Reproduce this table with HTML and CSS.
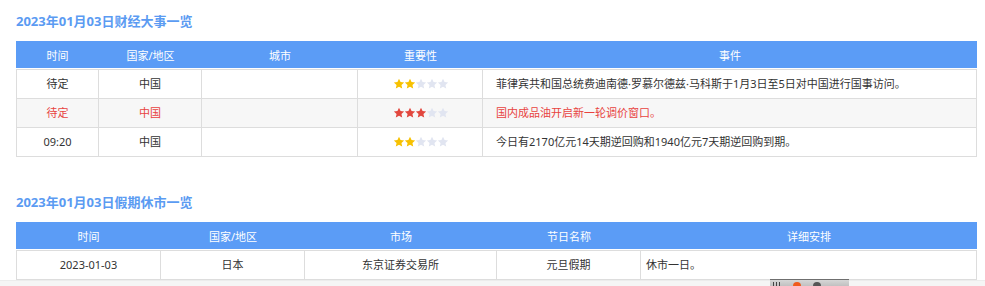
FILE: index.html
```html
<!DOCTYPE html>
<html lang="zh-CN">
<head>
<meta charset="utf-8">
<title>财经大事一览</title>
<link rel="stylesheet" href="styles.css">
</head>
<body>
<svg width="0" height="0" class="defs">
  <defs>
    <path id="star" d="M12 1.5l3.1 6.6 7.2.8-5.4 4.9 1.5 7.1L12 17.3l-6.4 3.6 1.5-7.1L1.7 8.9l7.2-.8z"/>
  </defs>
</svg>
<div class="page">
  <section class="section">
    <h2 class="title">2023年01月03日财经大事一览</h2>
    <table class="tbl tbl-events">
      <thead>
        <tr>
          <th class="e1">时间</th>
          <th class="e2">国家/地区</th>
          <th class="e3">城市</th>
          <th class="e4">重要性</th>
          <th class="e5">事件</th>
        </tr>
      </thead>
      <tbody>
        <tr>
          <td>待定</td>
          <td>中国</td>
          <td></td>
          <td><span class="stars gold"><svg viewBox="0 0 24 24" class="on"><use href="#star"/></svg><svg viewBox="0 0 24 24" class="on"><use href="#star"/></svg><svg viewBox="0 0 24 24"><use href="#star"/></svg><svg viewBox="0 0 24 24"><use href="#star"/></svg><svg viewBox="0 0 24 24"><use href="#star"/></svg></span></td>
          <td class="event">菲律宾共和国总统费迪南德·罗慕尔德兹·马科斯于1月3日至5日对中国进行国事访问。</td>
        </tr>
        <tr class="hot">
          <td>待定</td>
          <td>中国</td>
          <td></td>
          <td><span class="stars red"><svg viewBox="0 0 24 24" class="on"><use href="#star"/></svg><svg viewBox="0 0 24 24" class="on"><use href="#star"/></svg><svg viewBox="0 0 24 24" class="on"><use href="#star"/></svg><svg viewBox="0 0 24 24"><use href="#star"/></svg><svg viewBox="0 0 24 24"><use href="#star"/></svg></span></td>
          <td class="event">国内成品油开启新一轮调价窗口。</td>
        </tr>
        <tr>
          <td>09:20</td>
          <td>中国</td>
          <td></td>
          <td><span class="stars gold"><svg viewBox="0 0 24 24" class="on"><use href="#star"/></svg><svg viewBox="0 0 24 24" class="on"><use href="#star"/></svg><svg viewBox="0 0 24 24"><use href="#star"/></svg><svg viewBox="0 0 24 24"><use href="#star"/></svg><svg viewBox="0 0 24 24"><use href="#star"/></svg></span></td>
          <td class="event">今日有2170亿元14天期逆回购和1940亿元7天期逆回购到期。</td>
        </tr>
      </tbody>
    </table>
  </section>

  <section class="section">
    <h2 class="title">2023年01月03日假期休市一览</h2>
    <table class="tbl tbl-holiday">
      <thead>
        <tr>
          <th class="h1">时间</th>
          <th class="h2">国家/地区</th>
          <th class="h3">市场</th>
          <th class="h4">节日名称</th>
          <th class="h5">详细安排</th>
        </tr>
      </thead>
      <tbody>
        <tr>
          <td>2023-01-03</td>
          <td>日本</td>
          <td>东京证券交易所</td>
          <td>元旦假期</td>
          <td class="detail">休市一日。</td>
        </tr>
      </tbody>
    </table>
  </section>
</div>
<footer class="footbar">
  <div class="widget">
    <span class="w-bars"></span>
    <span class="w-flame"></span>
    <span class="w-dot"></span>
  </div>
</footer>
</body>
</html>
```

FILE: styles.css
```css
* { box-sizing: border-box; }

html, body {
  margin: 0;
  padding: 0;
  background: #fff;
}

body {
  font-family: "Noto Sans", "Noto Sans CJK SC", sans-serif;
  font-size: 11px;
  color: #333;
}

.defs { position: absolute; width: 0; height: 0; }

.page {
  padding: 0 0 0 16px;
}

.title {
  margin: 11px 0 10px;
  font-size: 13px;
  line-height: 20px;
  font-weight: bold;
  color: #5b9bf2;
}

.section + .section .title {
  margin-top: 35px;
}

.tbl {
  width: 961px;
  table-layout: fixed;
  border-collapse: separate;
  border-spacing: 0;
}

.tbl th {
  height: 28px;
  padding: 0;
  background: #5b9cf6;
  color: #fff;
  font-weight: normal;
  font-size: 11px;
  text-align: center;
  border-bottom: 1px solid #fff;
}

.tbl td {
  padding: 0;
  line-height: 28px;
  height: 29px;
  text-align: center;
  white-space: nowrap;
  border-right: 1px solid #dddddd;
  border-bottom: 1px solid #dddddd;
}

.tbl td:first-child {
  border-left: 1px solid #dddddd;
}

.tbl tbody tr:first-child td {
  border-top: 1px solid #dddddd;
  height: 30px;
}

.tbl tr.hot td {
  background: #f7f7f7;
  color: #e8433f;
}

.e1 { width: 83px; }
.e2 { width: 103px; }
.e3 { width: 156px; }
.e4 { width: 125px; }
.e5 { width: 494px; }

.h1 { width: 145px; }
.h2 { width: 144px; }
.h3 { width: 192px; }
.h4 { width: 144px; }
.h5 { width: 336px; }

.tbl td.event {
  text-align: left;
  padding-left: 13px;
}

.tbl td.detail {
  text-align: left;
  padding-left: 5px;
}

.stars {
  display: inline-flex;
  vertical-align: middle;
  margin-top: -2px;
  gap: 0;
}

.stars svg {
  width: 12px;
  height: 12px;
  margin-right: -1px;
  display: block;
  fill: #e1e5f1;
}

.stars.gold svg.on { fill: #f7c100; }
.stars.red svg.on { fill: #e2473e; }

.footbar {
  height: 6px;
  background: #f5f5f5;
  border-top: 1px solid #ececec;
}

.widget {
  margin-left: 770px;
  margin-top: -2px;
  width: 79px;
  height: 8px;
  border-top: 1px solid #6f6f6f;
  background: linear-gradient(#d6d6d6, #bdbdbd);
  display: flex;
  align-items: flex-start;
}

.w-bars {
  margin: 2px 0 0 3px;
  width: 8px;
  height: 5px;
  background: repeating-linear-gradient(90deg, #444 0 1px, transparent 1px 3px);
}

.w-flame {
  margin: 2px 0 0 12px;
  width: 8px;
  height: 4px;
  background: #f05a1c;
  border-radius: 4px 4px 0 0;
}

.w-dot {
  margin: 2px 0 0 12px;
  width: 8px;
  height: 5px;
  background: #555;
  border-radius: 4px 4px 0 0;
}
```
